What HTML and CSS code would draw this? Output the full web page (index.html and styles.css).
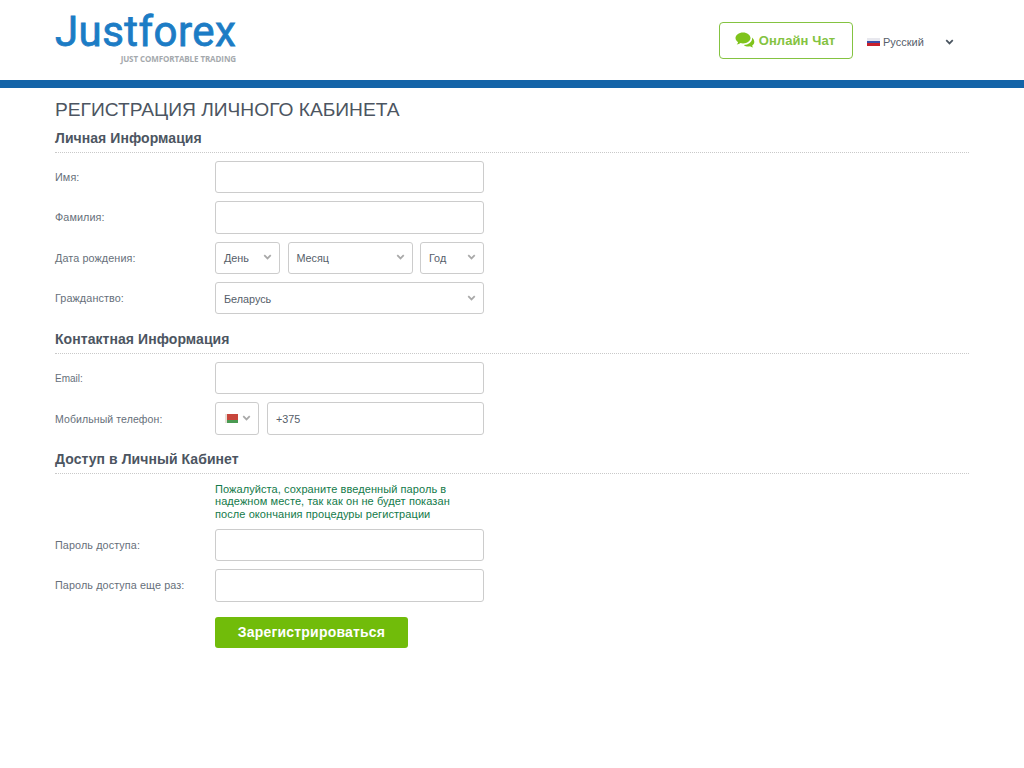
FILE: index.html
```html
<!DOCTYPE html>
<html lang="ru">
<head>
<meta charset="utf-8">
<title>Регистрация личного кабинета</title>
<link rel="stylesheet" href="styles.css">
</head>
<body>
<svg class="defs" width="0" height="0" aria-hidden="true">
  <symbol id="chev" viewBox="0 0 10 7"><path d="M1.2 1.4 5 5.2 8.8 1.4" fill="none" stroke="currentColor" stroke-width="2"/></symbol>
</svg>
<header class="header">
  <div class="logo">
    <div class="logo-name">Justforex</div>
    <div class="logo-tag">JUST COMFORTABLE TRADING</div>
  </div>
  <div class="header-right">
    <a class="chat">
      <svg class="chat-icon" viewBox="0 0 20 17"><path d="M8 0.5C3.8 0.5 0.5 3 0.5 6c0 1.7 1 3.2 2.6 4.2-.2 1-.8 1.8-1.4 2.4 1.5-.1 2.8-.7 3.8-1.5.8.2 1.6.3 2.5.3 4.2 0 7.5-2.4 7.5-5.4S12.200.5 8 .5z" fill="#7fc31c"/><path d="M17 5.500c.1.300.1.600.1.900 0 3.600-3.700 6.300-8.300 6.500 1.100 1 2.700 1.500 4.400 1.500.6 0 1.200-.1 1.800-.2.9.7 1.900 1.100 3.200 1.300-.5-.6-.9-1.300-1-2.100 1.300-.9 2.100-2.100 2.100-3.500 0-1.700-.9-3.100-2.300-4.400z" fill="#7fc31c"/></svg>
      <span>Онлайн Чат</span>
    </a>
    <div class="lang">
      <span class="flag-ru"></span>
      <span class="lang-name">Русский</span>
      <svg class="lang-chev"><use href="#chev"/></svg>
    </div>
  </div>
</header>
<div class="bar"></div>
<main class="page">
  <h1 class="title">Регистрация личного кабинета</h1>

  <section class="section">
    <h2 class="section-title">Личная Информация</h2>
    <div class="rows">
      <div class="row"><label class="label">Имя:</label><div class="field"><input class="input" type="text"></div></div>
      <div class="row"><label class="label">Фамилия:</label><div class="field"><input class="input" type="text"></div></div>
      <div class="row"><label class="label">Дата рождения:</label>
        <div class="field date">
          <div class="select day"><span>День</span><svg class="chev"><use href="#chev"/></svg></div>
          <div class="select month"><span>Месяц</span><svg class="chev"><use href="#chev"/></svg></div>
          <div class="select year"><span>Год</span><svg class="chev"><use href="#chev"/></svg></div>
        </div>
      </div>
      <div class="row"><label class="label">Гражданство:</label><div class="field"><div class="select"><span>Беларусь</span><svg class="chev"><use href="#chev"/></svg></div></div></div>
    </div>
  </section>

  <section class="section">
    <h2 class="section-title">Контактная Информация</h2>
    <div class="rows">
      <div class="row"><label class="label small">Email:</label><div class="field"><input class="input" type="text"></div></div>
      <div class="row"><label class="label phone-label">Мобильный телефон:</label>
        <div class="field phone">
          <div class="select code"><span class="flag-by"></span><svg class="chev"><use href="#chev"/></svg></div>
          <input class="input" type="text" value="+375">
        </div>
      </div>
    </div>
  </section>

  <section class="section">
    <h2 class="section-title">Доступ в Личный Кабинет</h2>
    <p class="note">Пожалуйста, сохраните введенный пароль в<br>надежном месте, так как он не будет показан<br>после окончания процедуры регистрации</p>
    <div class="rows">
      <div class="row"><label class="label">Пароль доступа:</label><div class="field"><input class="input" type="password"></div></div>
      <div class="row"><label class="label">Пароль доступа еще раз:</label><div class="field"><input class="input" type="password"></div></div>
    </div>
    <button class="submit" type="button">Зарегистрироваться</button>
  </section>
</main>
</body>
</html>
```
FILE: styles.css
```css
* { box-sizing: border-box; }
html, body { margin: 0; padding: 0; background: #fff; }
body { font-family: "Liberation Sans", Arial, sans-serif; color: #4c5561; height: 768px; overflow: hidden; }
.defs { position: absolute; }

.header { height: 80px; padding: 0 70px 0 55px; display: flex; justify-content: space-between; align-items: flex-start; }
.logo { width: 181px; padding-top: 8px; }
.logo-name { font-family: Roboto, sans-serif; font-size: 42px; line-height: 47px; height: 46px; letter-spacing: 0.45px; color: #1c7cc5; font-weight: 400; white-space: nowrap; -webkit-text-stroke: 0.8px #1c7cc5; }
.logo-tag { font-family: "Open Sans", sans-serif; font-size: 8px; line-height: 10px; font-weight: 700; color: #a5a9ad; text-align: right; white-space: nowrap; letter-spacing: -0.1px; }

.header-right { display: flex; align-items: flex-start; padding-top: 22px; }
.chat { width: 134px; height: 37px; border: 1px solid #84c341; border-radius: 4px; display: flex; align-items: center; justify-content: center; gap: 4px; color: #84c341; font-weight: 700; font-size: 13px; letter-spacing: 0.1px; padding: 0 0 1px 0; }
.chat-icon { width: 20px; height: 17px; margin-left: -2px; }
.lang { display: flex; align-items: center; width: 87px; height: 40px; margin-left: 14px; font-size: 11px; color: #56606b; }
.flag-ru { width: 13px; height: 8px; background: linear-gradient(#e8e8ee 0 33%, #3a4fa8 33% 66%, #c8202c 66%); margin-right: 3px; }
.lang-name { flex: 1; }
.lang-chev { width: 9px; height: 6px; color: #4a5560; }

.bar { height: 8px; background: #1464a8; }

.page { width: 914px; margin-left: 55px; }
.title { margin: 0; padding-top: 10px; height: 39px; font-size: 19.200px; line-height: 23px; font-weight: 400; text-transform: uppercase; color: #4c5561; }

.section-title { margin: 0; font-size: 14px; line-height: 16px; letter-spacing: 0.06px; font-weight: 700; color: #4c5561; height: 26px; padding-top: 3px; border-bottom: 1px dotted #c9c9c9; }
.section { margin-bottom: 13.800px; }
.section + .section { margin-bottom: 13.200px; }

.rows { display: flex; flex-direction: column; gap: 8px; padding-top: 8px; }
.row { display: flex; align-items: center; height: 32.33px; }
.label { width: 160px; font-size: 10.800px; color: #666f7a; flex: none; letter-spacing: 0.1px; }
.label.small { font-size: 10px; letter-spacing: 0; }
.label.phone-label { font-size: 10.500px; }
.field { width: 269px; height: 100%; }
.input { width: 100%; height: 100%; border: 1px solid #ccc; border-radius: 3px; background: #fff; padding: 0 8px; font: 10.800px "Liberation Sans", Arial, sans-serif; color: #555e69; outline: none; }

.select { height: 100%; border: 1px solid #ccc; border-radius: 3px; background: #fff; padding: 1px 7px 0 8px; display: flex; align-items: center; justify-content: space-between; font-size: 10.800px; color: #555e69; }
.chev { width: 9px; height: 6px; color: #a9a9a9; margin-top: -2px; }
.date { display: flex; justify-content: space-between; }
.day { width: 65px; }
.month { width: 125px; }
.year { width: 64px; }
.phone { display: flex; gap: 8px; }
.phone .input { flex: 1; width: auto; }
.code { width: 44px; flex: none; padding: 0 7px 0 9px; }
.flag-by { display: block; width: 13px; height: 9px; background: linear-gradient(#c8463c 0 66%, #4a9a52 66%); border-left: 2px solid #e8e0d8; }

.note { margin: 0 0 0 160px; padding-top: 9px; height: 47px; font-size: 11px; line-height: 12.500px; letter-spacing: 0.08px; color: #137a4a; }
.submit { display: block; margin: 15px 0 0 160px; width: 193px; height: 31px; border: 0; border-radius: 3px; background: #71bc0a; color: #fff; font: 700 14px "Liberation Sans", Arial, sans-serif; letter-spacing: 0.2px; }
```
